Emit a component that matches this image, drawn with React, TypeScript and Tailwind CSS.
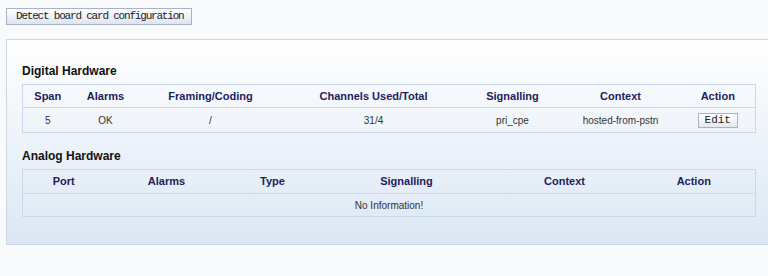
import React from "react";

const digitalCols = [
  { label: "Span", w: 50 },
  { label: "Alarms", w: 66 },
  { label: "Framing/Coding", w: 144 },
  { label: "Channels Used/Total", w: 182 },
  { label: "Signalling", w: 96 },
  { label: "Context", w: 120 },
  { label: "Action", w: 75 },
];

const analogCols = [
  { label: "Port", w: 82 },
  { label: "Alarms", w: 124 },
  { label: "Type", w: 88 },
  { label: "Signalling", w: 180 },
  { label: "Context", w: 136 },
  { label: "Action", w: 123 },
];

function Heading({ children }: { children: React.ReactNode }) {
  return (
    <div className="text-[12px] leading-[14px] font-bold text-[#111]" style={{ fontFamily: '"Liberation Sans", Arial, sans-serif' }}>
      {children}
    </div>
  );
}

export default function App() {
  const sans = { fontFamily: '"Liberation Sans", Arial, sans-serif' };
  const mono = { fontFamily: '"Liberation Mono", "Courier New", monospace' };
  return (
    <div className="w-[768px] h-[276px] overflow-hidden bg-[#f9fafb] pt-[8px] pl-[6px]" style={sans}>
      <button
        className="block h-[17px] w-[186px] border border-[#a9b3c6] bg-gradient-to-b from-[#ffffff] to-[#dde4f0] text-[11px] leading-[15px] text-[#222] tracking-[-1.2px] text-left pl-[9px]"
        style={mono}
      >
        Detect board card configuration
      </button>

      <div className="mt-[14px] w-[780px] h-[206px] border border-[#cdd7e3] bg-gradient-to-b from-[#ffffff] to-[#dbe7f4] pt-[24px] pl-[15px]">
        <Heading>Digital Hardware</Heading>
        <table className="mt-[6px] w-[733px] table-fixed border-collapse border border-[#c9d8ea]">
          <colgroup>
            {digitalCols.map((c) => (
              <col key={c.label} style={{ width: c.w }} />
            ))}
          </colgroup>
          <thead>
            <tr className="h-[23px] border-b border-[#c9d8ea]">
              {digitalCols.map((c) => (
                <th key={c.label} className="text-[11px] font-bold text-[#1d1d5e] text-center p-0">
                  {c.label}
                </th>
              ))}
            </tr>
          </thead>
          <tbody>
            <tr className="h-[25px] text-[10px] text-[#333] text-center">
              <td className="p-0">5</td>
              <td className="p-0">OK</td>
              <td className="p-0">/</td>
              <td className="p-0">31/4</td>
              <td className="p-0">pri_cpe</td>
              <td className="p-0">hosted-from-pstn</td>
              <td className="p-0">
                <button
                  className="h-[15px] w-[40px] border border-[#aab3c3] bg-gradient-to-b from-[#ffffff] to-[#e4e9f1] text-[11px] leading-[13px] text-[#222] align-middle"
                  style={mono}
                >
                  Edit
                </button>
              </td>
            </tr>
          </tbody>
        </table>

        <div className="mt-[16px]">
          <Heading>Analog Hardware</Heading>
        </div>
        <table className="mt-[6px] w-[733px] table-fixed border-collapse border border-[#c9d8ea]">
          <colgroup>
            {analogCols.map((c) => (
              <col key={c.label} style={{ width: c.w }} />
            ))}
          </colgroup>
          <thead>
            <tr className="h-[24px] border-b border-[#c9d8ea]">
              {analogCols.map((c) => (
                <th key={c.label} className="text-[11px] font-bold text-[#1d1d5e] text-center p-0">
                  {c.label}
                </th>
              ))}
            </tr>
          </thead>
          <tbody>
            <tr className="h-[23px] text-[10px] text-[#333] text-center">
              <td className="p-0" colSpan={6}>
                No Information!
              </td>
            </tr>
          </tbody>
        </table>
      </div>
    </div>
  );
}
